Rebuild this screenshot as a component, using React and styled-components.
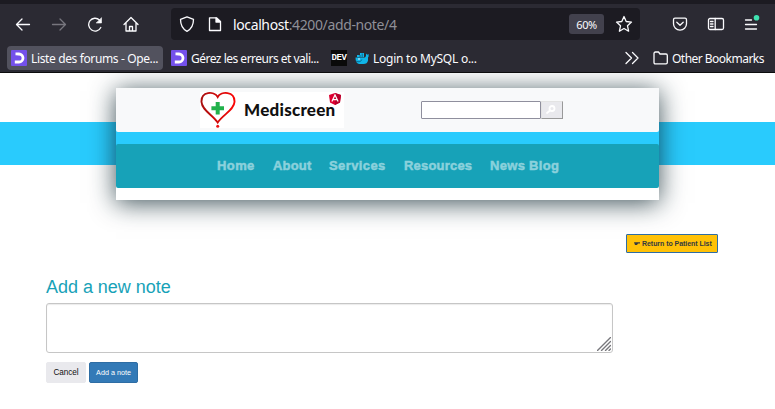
import React from "react";
import styled, { createGlobalStyle } from "styled-components";

const GlobalStyle = createGlobalStyle`
  * { box-sizing: border-box; }
  body { margin: 0; background: #fff; overflow: hidden; }
`;

const Window = styled.div`
  width: 775px;
  height: 409px;
  display: flex;
  flex-direction: column;
  background: #fff;
  overflow: hidden;
  font-family: "Liberation Sans", Arial, sans-serif;
`;

const Chrome = styled.div`
  flex: none;
  height: 73px;
  background: #2b2a33;
  border-top: 4px solid #1c1b22;
  border-bottom: 1px solid #0c0c0d;
  color: #fbfbfe;
  font-family: "Noto Sans", "Open Sans", sans-serif;
`;

const Toolbar = styled.div`
  height: 40px;
  display: flex;
  align-items: center;
`;

const Icon = styled.svg`
  flex: none;
  display: block;
  fill: none;
  stroke: ${(p) => p.$color || "#fbfbfe"};
  stroke-width: ${(p) => p.$weight || 1.3};
  stroke-linecap: round;
  stroke-linejoin: round;
`;

const NavButtons = styled.div`
  width: 171px;
  padding-left: 15px;
  display: flex;
  gap: 20px;
`;

const AddressBar = styled.div`
  width: 469px;
  height: 32px;
  padding: 0 7px 0 8px;
  display: flex;
  align-items: center;
  background: #1c1b22;
  border-radius: 4px;
`;

const PageIcons = styled.div`
  display: flex;
  gap: 12px;
  width: 54px;
`;

const Address = styled.div`
  flex: 1;
  font-size: 14px;
  line-height: 20px;
  letter-spacing: -0.38px;
  color: #8f8f97;
  white-space: nowrap;
  padding-top: 1px;
`;

const Host = styled.span`
  color: #fbfbfe;
`;

const Zoom = styled.div`
  width: 35px;
  height: 20px;
  margin-right: 11px;
  border-radius: 3px;
  background: #42414d;
  font-size: 11px;
  line-height: 21px;
  letter-spacing: -0.4px;
  text-align: center;
`;

const ToolButtons = styled.div`
  padding: 1px 0 0 31px;
  display: flex;
  gap: 18px;
`;

const Bookmarks = styled.div`
  height: 28px;
  padding: 2px 11px 2px 7px;
  display: flex;
  align-items: center;
`;

const Bookmark = styled.div`
  flex: none;
  width: ${(p) => p.$w}px;
  height: 24px;
  padding-left: ${(p) => p.$pad || 0}px;
  margin-right: ${(p) => p.$after || 0}px;
  display: flex;
  align-items: center;
  gap: 4px;
  border-radius: 4px;
  background: ${(p) => (p.$active ? "#52525e" : "transparent")};
  font-size: 12px;
  line-height: 24px;
  letter-spacing: ${(p) => p.$track || 0}px;
  white-space: nowrap;
`;

const BookmarkLabel = styled.span`
  padding-top: 1px;
`;

const Spacer = styled.div`
  flex: 1;
`;

const Favicon = styled.svg`
  flex: none;
  display: block;
`;

const DevBadge = styled.div`
  width: 16px;
  height: 16px;
  display: flex;
  justify-content: center;
  background: #0a0a0a;
  color: #fff;
  font: bold 9px/16px "Liberation Mono", monospace;
  letter-spacing: -0.4px;
`;

const Page = styled.div`
  flex: 1;
  display: flex;
  flex-direction: column;
  overflow: hidden;
`;

const Banner = styled.div`
  flex: none;
  height: 127px;
  padding: 15px 116px 0;
  background: linear-gradient(#29cbfd, #29cbfd) 0 49px / 100% 43px no-repeat;
`;

const BannerCard = styled.div`
  height: 112px;
  display: flex;
  flex-direction: column;
  gap: 12px;
  background: linear-gradient(#29cbfd, #29cbfd) 0 40px / 100% 20px no-repeat #fff;
  box-shadow: 0 3px 24px rgba(12, 38, 46, 0.8);
`;

const BrandBar = styled.div`
  height: 44px;
  padding-left: 84px;
  display: flex;
  align-items: center;
  background: #f8f9fa;
  border-radius: 0 0 2px 2px;
`;

const Brand = styled.div`
  width: 144px;
  height: 36px;
  margin-right: 77px;
  display: flex;
  background: #fff;
`;

const BrandName = styled.div`
  width: 93px;
  padding-left: 8px;
  font: 900 17px/36px Lato, sans-serif;
  letter-spacing: 0.25px;
  white-space: nowrap;
  color: #111;
`;

const SearchField = styled.input`
  width: 120px;
  height: 18px;
  padding: 0 2px;
  border: 1px solid #8f8f9d;
  border-radius: 1px;
  background: #fff;
`;

const SearchButton = styled.button`
  width: 22px;
  height: 18px;
  padding: 0 0 0 3px;
  border: 1px solid #e3e3e3;
  border-right-color: #999;
  border-bottom-color: #999;
  background: #e9e9ed;
`;

const NavBar = styled.nav`
  height: 44px;
  padding-left: 101px;
  display: flex;
  align-items: center;
  gap: 18px;
  background: #17a2b8;
  border-radius: 2px;
`;

const NavLink = styled.a`
  width: ${(p) => p.$w}px;
  color: #8bd1dc;
  font: bold 13px/16px "Liberation Sans", Arial, sans-serif;
  -webkit-text-stroke: 0.5px #8bd1dc;
  letter-spacing: ${(p) => p.$track}px;
  white-space: nowrap;
`;

const Actions = styled.div`
  display: flex;
  justify-content: flex-end;
  padding: 34px 57px 0 0;
`;

const ReturnButton = styled.button`
  width: 92px;
  height: 19px;
  padding: 0 0 0 7px;
  display: flex;
  align-items: center;
  gap: 2px;
  border: 1px solid #2e6da4;
  border-radius: 1px;
  background: #ffc107;
  color: #343a40;
  font: bold 7px/17px "Liberation Sans", Arial, sans-serif;
  letter-spacing: -0.05px;
  white-space: nowrap;
`;

const NoteForm = styled.form`
  padding: 22px 0 0 46px;
`;

const Title = styled.h1`
  margin: 0 0 4px;
  height: 24px;
  color: #17a2b8;
  font: 18px/24px "Liberation Sans", Arial, sans-serif;
  letter-spacing: -0.03px;
`;

const NoteBox = styled.div`
  width: 567px;
  height: 50px;
  padding: 0 1px 1px 0;
  display: flex;
  align-items: flex-end;
  justify-content: flex-end;
  border: 1px solid #c6c6c6;
  border-radius: 3px;
  background: #fff;
  box-shadow: inset 0 1px 1px rgba(0, 0, 0, 0.08);
`;

const FormButtons = styled.div`
  margin-top: 9px;
  display: flex;
  gap: 3px;
`;

const FormButton = styled.button`
  width: ${(p) => (p.$primary ? 49 : 40)}px;
  height: 21px;
  padding: 0;
  border: 1px solid ${(p) => (p.$primary ? "#2e6da4" : "#e9e9ed")};
  border-radius: 2px;
  background: ${(p) => (p.$primary ? "#337ab7" : "#e9e9ed")};
  color: ${(p) => (p.$primary ? "#fff" : "#111")};
  font: ${(p) => (p.$primary ? 7.2 : 8.2)}px/20px "Liberation Sans", Arial, sans-serif;
  letter-spacing: ${(p) => (p.$primary ? 0 : -0.1)}px;
  white-space: nowrap;
`;

const ClassroomIcon = () => (
  <Favicon width="16" height="16" viewBox="0 0 16 16">
    <rect width="16" height="16" rx="1" fill="#7451eb" />
    <path d="M4.500 4H8a4 4 0 0 1 0 8H3.800" fill="none" stroke="#fff" strokeWidth="2.800" />
    <path d="M2.500 5.600h4v2H2.500z" fill="#7451eb" />
  </Favicon>
);

const WhaleIcon = () => (
  <Favicon width="14" height="14" viewBox="0 0 14 14">
    <path d="M.5 6.500H10L11 5V2.500l1.200 1.300L13.600 3v2.500l-.6 1v3C12.500 12 11 13 8.500 13H4C1.500 12.500.5 10 .5 6.500Z" fill="#10b5e8" />
    <path d="M2 6V4h3V2h4v4Z" fill="#10b5e8" />
    <path d="M.8 10c3 1.500 5.500.5 6-1.500M5 4v2M7.200 2.500V6" fill="none" stroke="#075777" strokeWidth=".8" />
    <circle cx="4" cy="8" r=".8" fill="#fff" />
  </Favicon>
);

const HeartLogo = () => (
  <svg width="36" height="36" viewBox="0 0 36 36">
    <defs>
      <linearGradient id="heart" x1="0" x2="1">
        <stop offset="0" stopColor="#a90e0e" />
        <stop offset="1" stopColor="#fb0505" />
      </linearGradient>
    </defs>
    <path d="M17.700 5C14-1 1-1 1.500 10 2 18 12 22.500 17.700 30.500 23 22.500 34 18 34.500 10 35-1 21-1 17.700 5Z" fill="none" stroke="url(#heart)" strokeWidth="1.9" />
    <path d="M15.700 10h4v4.300H24v4h-4.300v4.300h-4v-4.300h-4.300v-4h4.300Z" fill="#22b14c" />
    <circle cx="17.700" cy="34.300" r="1.500" fill="#ee1111" />
  </svg>
);

const AngularLogo = () => (
  <svg width="12" height="14" viewBox="0 0 12 14">
    <path d="M6 1l6 2-1 7.500L6 13l-5-2.500L0 3Z" fill="#dd0031" />
    <path d="M6 1l6 2-1 7.500L6 13Z" fill="#b8002c" />
    <path d="M2.900 9.500 6 3l3.100 6.500M4.200 7.700h3.600" fill="none" stroke="#fff" strokeWidth="1.200" />
  </svg>
);

export default function App() {
  return (
    <Window>
      <GlobalStyle />
      <Chrome>
        <Toolbar>
          <NavButtons>
            <Icon width="16" height="16" viewBox="0 0 16 16"><path d="M14.500 8.500H1.800M7 3 1.500 8.500 7 14" /></Icon>
            <Icon width="16" height="16" viewBox="0 0 16 16" $color="#77767e"><path d="M1.500 8.500h12.700M9 3l5.500 5.500L9 14" /></Icon>
            <Icon width="16" height="16" viewBox="0 0 16 16"><path d="M13.800 11.500A6.400 6.400 0 1 1 12.500 4" /><path d="M14.500 2v5H9.500Z" fill="#fbfbfe" strokeWidth=".6" /></Icon>
            <Icon width="16" height="16" viewBox="0 0 16 16"><path d="m1 8.500 7-7 7 7M3 7v8h10V7M6.500 15v-4.500h3V15" /></Icon>
          </NavButtons>
          <AddressBar>
            <PageIcons>
              <Icon width="16" height="16" viewBox="0 0 16 16"><path d="m8 .8 6.500 2.500c0 6-1.500 9.500-6.500 12C3 12.800 1.500 9.300 1.500 3.300Z" /></Icon>
              <Icon width="16" height="16" viewBox="0 0 16 16"><path d="M2.500 1.800h7L13.500 5.500v9h-11Z" /><path d="M9 2v4h4Z" fill="#fbfbfe" /></Icon>
            </PageIcons>
            <Address><Host>localhost</Host>:4200/add-note/4</Address>
            <Zoom>60%</Zoom>
            <Icon width="18" height="18" viewBox="0 0 18 18"><path d="m9 1.500 2.200 5 5.300.6-4 3.700 1.100 5.400L9 13.500l-4.600 2.700 1.100-5.400-4-3.700 5.300-.6Z" /></Icon>
          </AddressBar>
          <ToolButtons>
            <Icon width="18" height="18" viewBox="0 0 18 18"><path d="M4 3.200h10q1.500 0 1.500 1.500v4a6.500 6.500 0 0 1-13 0v-4Q2.500 3.200 4 3.200Z" /><path d="m5.800 7.300 3.200 3 3.200-3" /></Icon>
            <Icon width="18" height="18" viewBox="0 0 18 18"><rect x="1.500" y="3.500" width="15" height="11" rx="1.500" /><path d="M8.200 3.500v11M3.500 6.500h2.500M3.500 9h2.500M3.500 11.500h2.500" /></Icon>
            <Icon width="18" height="20" viewBox="0 0 18 20"><path d="M2.500 5h6M2.500 9.500h11M2.500 14h11" /><circle cx="13.500" cy="2.800" r="2.800" fill="#3fe1b0" stroke="none" /></Icon>
          </ToolButtons>
        </Toolbar>
        <Bookmarks>
          <Bookmark $w={156} $pad={4} $after={8} $track={-0.37} $active><ClassroomIcon /><BookmarkLabel>Liste des forums - Ope...</BookmarkLabel></Bookmark>
          <Bookmark $w={152} $after={8} $track={-0.5}><ClassroomIcon /><BookmarkLabel>Gérez les erreurs et vali...</BookmarkLabel></Bookmark>
          <Bookmark $w={16} $after={8}><DevBadge>DEV</DevBadge></Bookmark>
          <Bookmark $w={124} $track={-0.25}><WhaleIcon /><BookmarkLabel>Login to MySQL o...</BookmarkLabel></Bookmark>
          <Spacer />
          <Bookmark $w={28}><Icon width="14" height="14" viewBox="0 0 14 14"><path d="m1 1.500 5.500 5.500L1 12.500M7.500 1.500 13 7l-5.500 5.500" /></Icon></Bookmark>
          <Bookmark $w={111} $track={-0.52}><Icon width="15" height="16" viewBox="0 0 15 16"><path d="M1 3.500Q1 2 2.500 2h3L7 4h6q1.300 0 1.300 1.500v7q0 1.300-1.300 1.300H2.300Q1 13.800 1 12.500Z" /></Icon><BookmarkLabel>Other Bookmarks</BookmarkLabel></Bookmark>
        </Bookmarks>
      </Chrome>
      <Page>
        <Banner>
          <BannerCard>
            <BrandBar>
              <Brand>
                <HeartLogo />
                <BrandName>Mediscreen</BrandName>
                <AngularLogo />
              </Brand>
              <SearchField aria-label="Search" />
              <SearchButton type="button" aria-label="Submit search">
                <Icon width="12" height="10" viewBox="0 0 12 10" $color="#fff" $weight={1.8}><circle cx="7" cy="3.500" r="2.500" /><path d="M5 5.500 2 8" /></Icon>
              </SearchButton>
            </BrandBar>
            <NavBar>
              <NavLink $w={38} $track={0.4}>Home</NavLink>
              <NavLink $w={38} $track={0.2}>About</NavLink>
              <NavLink $w={57} $track={0.4}>Services</NavLink>
              <NavLink $w={68} $track={0.2}>Resources</NavLink>
              <NavLink $w={70} $track={0.3}>News Blog</NavLink>
            </NavBar>
          </BannerCard>
        </Banner>
        <Actions>
          <ReturnButton>
            <svg width="6" height="5" viewBox="0 0 6 5"><path d="M0 1.200h6v1.300H4L3 4H1Z" fill="#343a40" /></svg>
            Return to Patient List
          </ReturnButton>
        </Actions>
        <NoteForm>
          <Title>Add a new note</Title>
          <NoteBox role="textbox">
            <Icon width="14" height="14" viewBox="0 0 14 14" $color="#77777c" $weight={1.4}><path d="M.5 13.500 13.500.5M4.500 13.500l9-9M8.500 13.500l5-5M12 13.500l1.500-1.500" /></Icon>
          </NoteBox>
          <FormButtons>
            <FormButton type="button">Cancel</FormButton>
            <FormButton type="button" $primary>Add a note</FormButton>
          </FormButtons>
        </NoteForm>
      </Page>
    </Window>
  );
}
